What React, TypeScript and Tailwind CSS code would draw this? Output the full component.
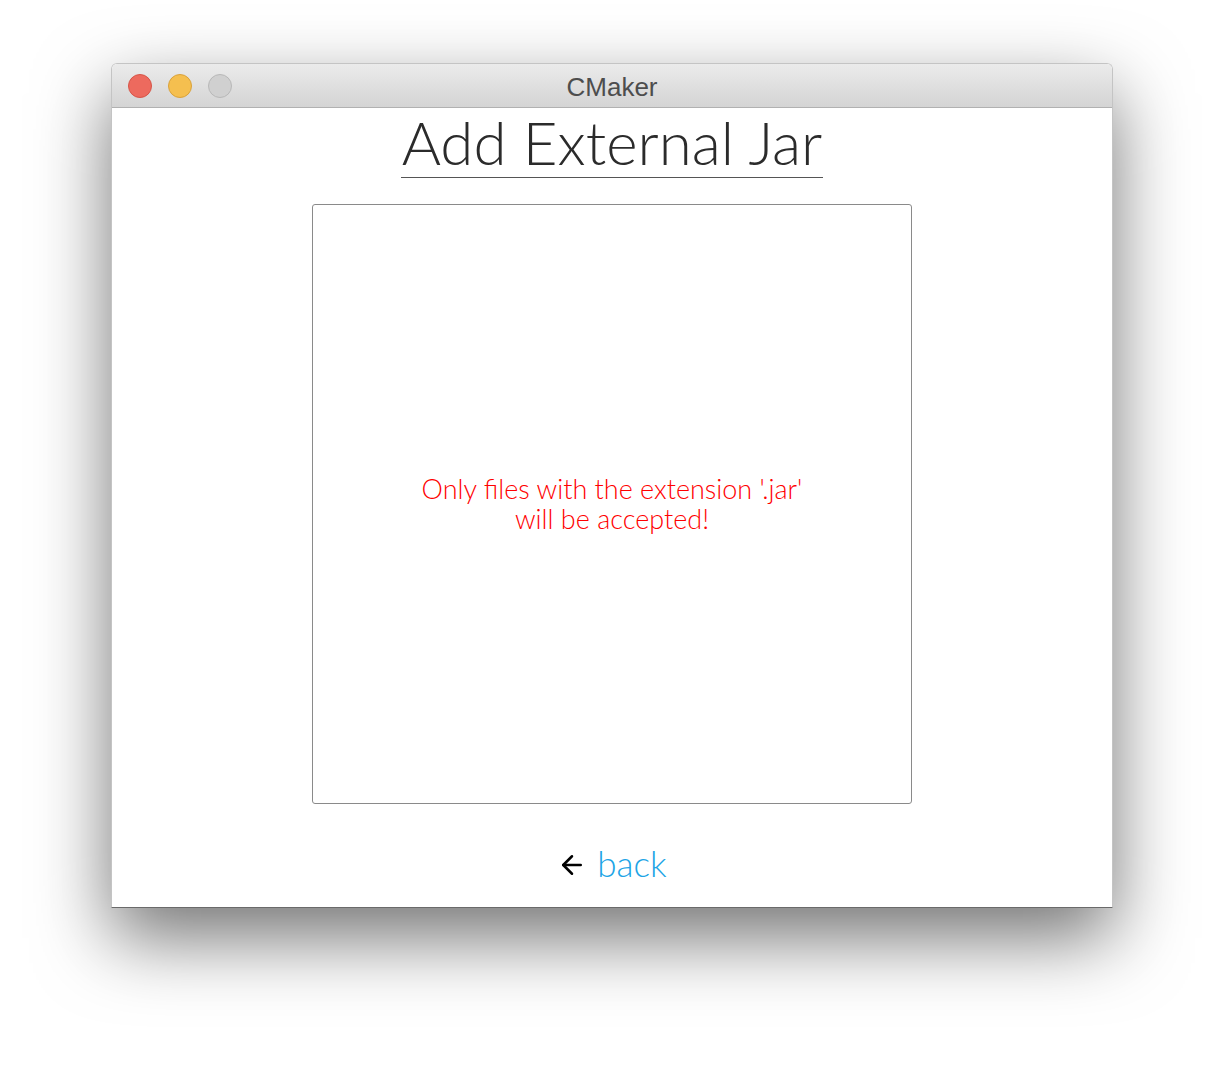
import React from 'react';
import { ArrowLeft } from 'lucide-react';

export default function App() {
    return (
        <div className="w-[1224px] h-[1068px] bg-white pt-[63px]">
            <div className="ml-[111px] w-[1002px] h-[845px] flex flex-col rounded-t-[6px] overflow-hidden shadow-[0_30px_75px_rgba(0,0,0,0.55)] border border-[#c4c4c4] border-b-[#6a6a6a]">
                {/* title bar */}
                <div className="relative h-[44px] shrink-0 flex items-center justify-center bg-gradient-to-b from-[#ebebeb] to-[#d4d4d4] border-b border-[#b1b1b1]">
                    <div className="absolute left-[16px] top-[10px] flex gap-[16px]">
                        <span className="w-[24px] h-[24px] rounded-full bg-[#ed6a5e] border border-[#d65548]" />
                        <span className="w-[24px] h-[24px] rounded-full bg-[#f5bf4f] border border-[#d9a23b]" />
                        <span className="w-[24px] h-[24px] rounded-full bg-[#d0d0d0] border border-[#b8b8b8]" />
                    </div>
                    <span className="mt-[3px] text-[26px] text-[#4d4d4d] font-['Liberation_Sans',Arial,sans-serif]">CMaker</span>
                </div>

                {/* body */}
                <div className="flex-1 bg-white flex flex-col items-center font-['Lato',sans-serif]">
                    <h1 className="mt-[3px] px-[1px] text-[60px] leading-[62px] font-light text-[#2b2b2b] border-b border-[#555] pb-[4px]">
                        Add External Jar
                    </h1>
                    <div className="mt-[26px] w-[600px] h-[600px] border border-[#8a8a8a] rounded-[3px] flex items-center justify-center">
                        <p className="text-center text-[27px] leading-[30px] font-light text-[#ff0000]">
                            Only files with the extension '.jar'
                            <br />
                            will be accepted!
                        </p>
                    </div>
                    <a href="#" className="mt-[39px] flex items-center gap-[10px] text-[35px] leading-[40px] font-light text-[#20a4e6]">
                        <ArrowLeft className="text-black mt-[4px]" size={30} strokeWidth={2} />
                        back
                    </a>
                </div>
            </div>
        </div>
    );
}
